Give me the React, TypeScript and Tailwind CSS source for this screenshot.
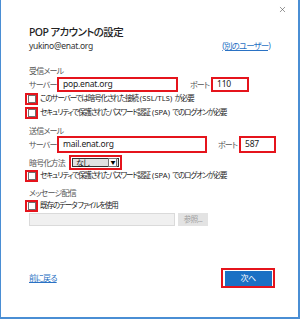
import { X } from "lucide-react";

const jp = "font-['Noto_Sans','Noto_Sans_CJK_JP',sans-serif] [font-feature-settings:'palt']";

// latin runs keep normal spacing, Japanese runs are squeezed like Meiryo UI
function Jp({ text }: { text: string }) {
  const parts = text.split(/([\x20-\x7e]*[\x21-\x7e][\x20-\x7e]*)/);
  return (
    <>
      {parts.map((p, i) =>
        i % 2 === 1 ? (
          <span key={i} className="tracking-[0.1px]">
            {p}
          </span>
        ) : (
          <span key={i}>{p}</span>
        )
      )}
    </>
  );
}

function RedBox({ className, children }: { className?: string; children?: React.ReactNode }) {
  return (
    <div className={`flex items-center border-2 border-[#e5141c] bg-white ${className ?? ""}`}>
      {children}
    </div>
  );
}

function Check({ label }: { label: string }) {
  return (
    <div className="-ml-[4px] flex h-[12px] items-center">
      <span className="flex h-[12px] w-[13px] items-center justify-center border-2 border-[#e5141c]">
        <span className="h-[8px] w-[8px] border border-[#6f6f6f] bg-white" />
      </span>
      <span className="ml-[2px] whitespace-pre text-[7.5px] tracking-[-1.1px] text-[#222]">
        <Jp text={label} />
      </span>
    </div>
  );
}

function SectionLabel({ children, className }: { children: React.ReactNode; className?: string }) {
  return (
    <div className={`flex h-[12px] items-center text-[8px] tracking-[-0.8px] text-[#555] ${className ?? ""}`}>
      {children}
    </div>
  );
}

export default function App() {
  return (
    <div
      className={`relative flex h-[319px] w-[300px] flex-col overflow-hidden border-b-2 border-l border-r-2 border-[#4a8ed4] bg-white pl-[28px] pt-[26px] ${jp}`}
    >
      <button className="absolute right-[11px] top-[5px] text-[#555]">
        <X size={9} strokeWidth={1.6} />
      </button>

      <div className="flex h-[14px] items-center text-[10.5px] font-medium tracking-[-0.6px] text-[#222]">
        POP アカウントの設定
      </div>

      <div className="flex h-[12px] items-center justify-between pr-[28px] text-[8.5px] text-[#333]">
        <span className="tracking-[-0.3px]">yukino@enat.org</span>
        <a className="tracking-[-0.9px] text-[#2a72c4] underline underline-offset-1">(別のユーザー)</a>
      </div>

      <SectionLabel className="mt-[13px]">受信メール</SectionLabel>

      <div className="flex h-[15px] items-center text-[8px] tracking-[-0.8px] text-[#555]">
        <span className="w-[28px]">サーバー</span>
        <RedBox className="h-[15px] w-[121px] pl-[4px] text-[8.5px] tracking-[-0.2px] text-[#222]">
          pop.enat.org
        </RedBox>
        <span className="ml-[12px] w-[21px]">ポート</span>
        <RedBox className="h-[15px] w-[38px] pl-[4px] text-[8.5px] tracking-[-0.2px] text-[#222]">110</RedBox>
      </div>

      <div className="mt-[1px] flex flex-col gap-[2px]">
        <Check label="このサーバーでは暗号化された接続 (SSL/TLS) が必要" />
        <Check label="セキュリティで保護されたパスワード認証 (SPA) でのログオンが必要" />
      </div>

      <SectionLabel className="mt-[6px]">送信メール</SectionLabel>

      <div className="-mt-[1px] flex h-[17px] items-center text-[8px] tracking-[-0.8px] text-[#555]">
        <span className="w-[28px]">サーバー</span>
        <RedBox className="h-[17px] w-[150px] pl-[4px] text-[8.5px] tracking-[-0.2px] text-[#222]">
          mail.enat.org
        </RedBox>
        <span className="ml-[11px] w-[21px]">ポート</span>
        <RedBox className="h-[17px] w-[37px] pl-[4px] text-[8.5px] tracking-[-0.2px] text-[#222]">587</RedBox>
      </div>

      <div className="mt-[2px] flex h-[15px] items-center text-[8px] tracking-[-0.8px] text-[#555]">
        <span className="w-[40px]">暗号化方法</span>
        <div className="flex h-[15px] w-[53px] items-center border-2 border-[#e5141c] p-px">
          <div className="flex h-full flex-1 items-center justify-between border border-[#333] bg-[#e1e1e1] pl-[3px] pr-px text-[#111]">
            <span>なし</span>
            <span className="flex h-[9px] w-[9px] items-center justify-center border border-[#777] bg-white text-[5px] text-black">
              ▼
            </span>
          </div>
        </div>
      </div>

      <div className="mt-0">
        <Check label="セキュリティで保護されたパスワード認証 (SPA) でのログオンが必要" />
      </div>

      <SectionLabel className="mt-[5px]">メッセージ配信</SectionLabel>

      <div className="mt-[1px]">
        <Check label="既存のデータ ファイルを使用" />
      </div>

      <div className="mt-px flex h-[13px] items-center">
        <div className="h-[13px] w-[146px] border border-[#dadada] bg-[#f0f0f0]" />
        <div className="ml-[3px] flex h-[13px] w-[30px] items-center justify-center bg-[#e3e3e3] text-[7.5px] tracking-[-0.5px] text-[#a0a0a0]">
          参照...
        </div>
      </div>

      <div className="mt-[42px] flex h-[20px] items-center justify-between pr-[23px]">
        <a className="text-[8px] tracking-[-0.8px] text-[#2a72c4] underline underline-offset-1">前に戻る</a>
        <div className="flex h-[20px] w-[54px] items-center justify-center border-2 border-[#e5141c] bg-white">
          <div className="flex h-[15px] w-[47px] items-center justify-center bg-[#1b70c4] text-[8px] tracking-[-0.6px] text-white">
            次へ
          </div>
        </div>
      </div>
    </div>
  );
}
